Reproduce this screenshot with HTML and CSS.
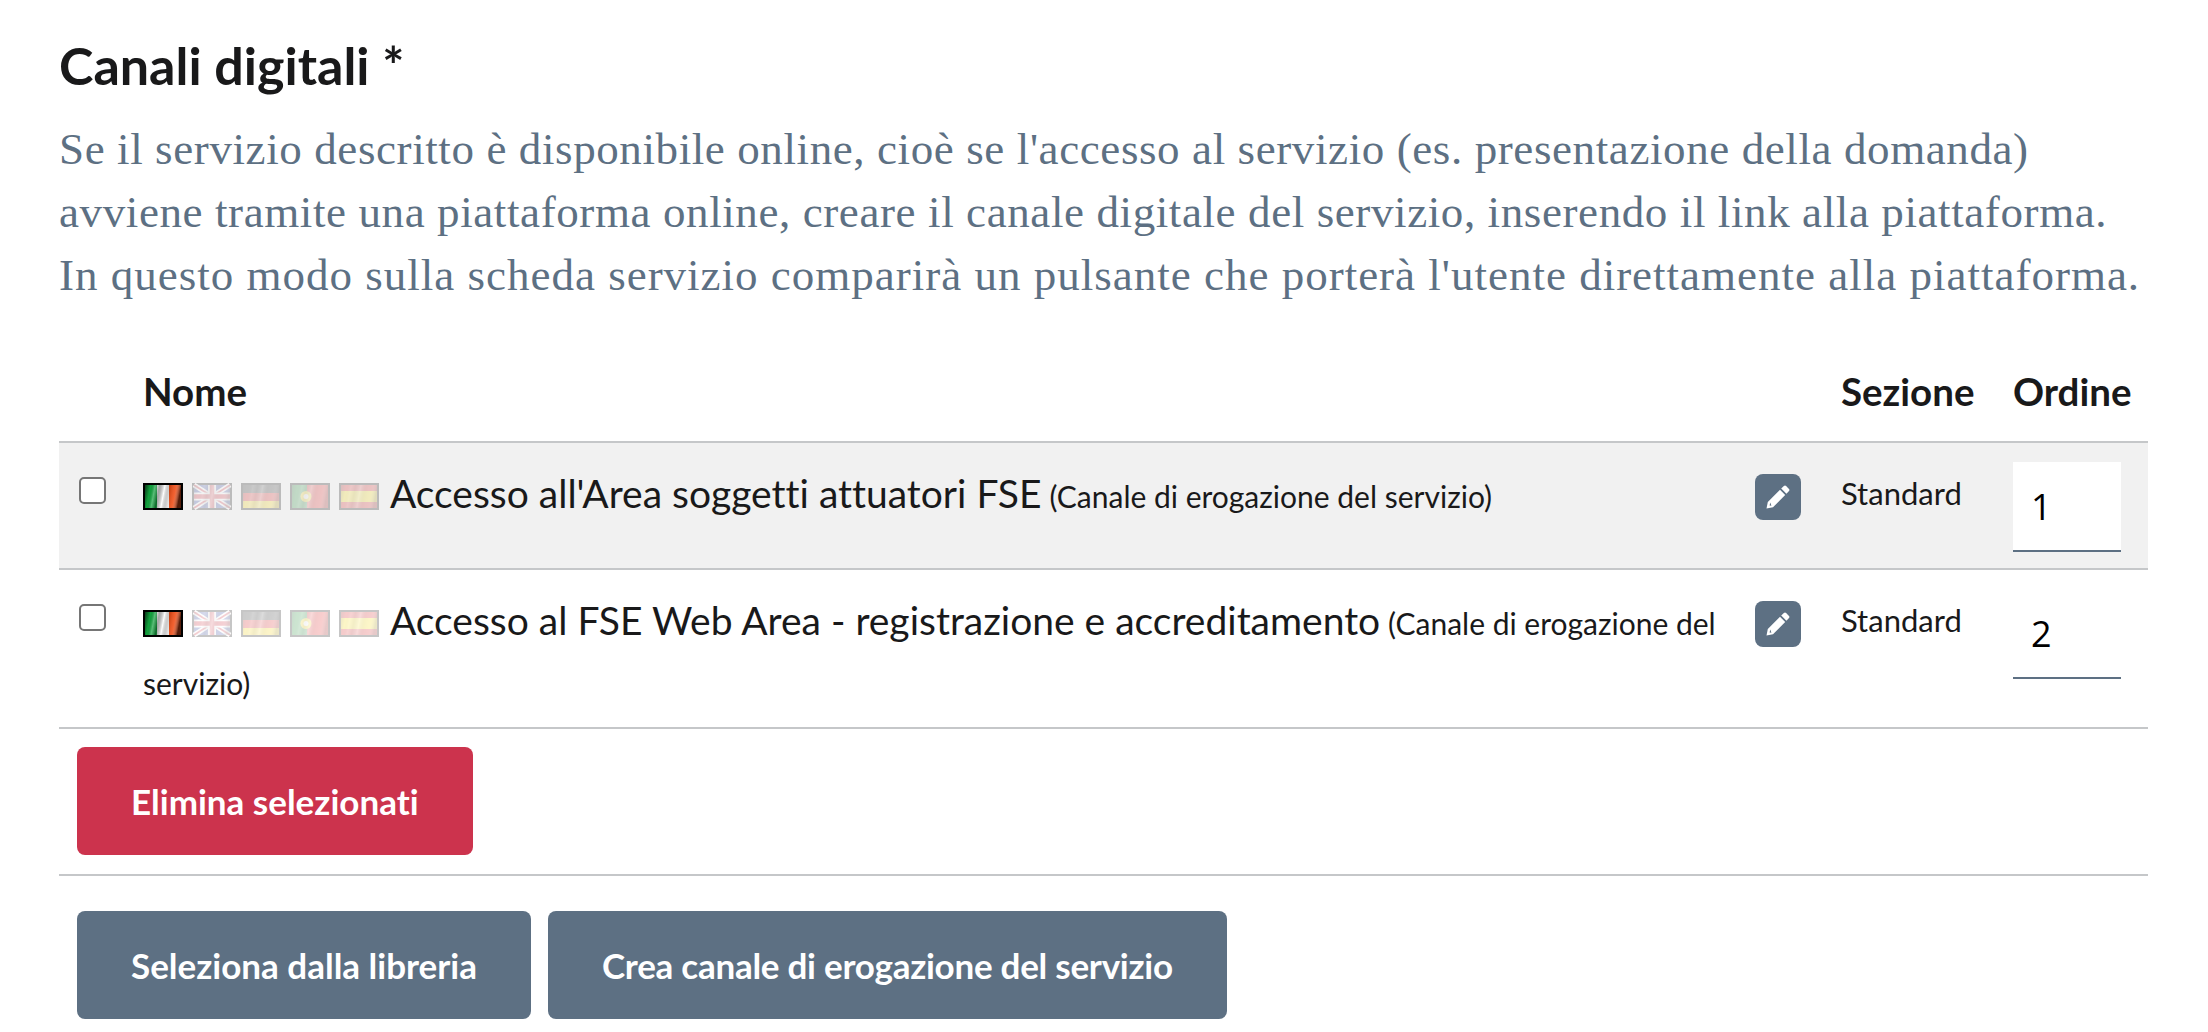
FILE: index.html
```html
<!DOCTYPE html>
<html lang="it">
<head>
    <meta charset="UTF-8">
    <title>Canali digitali</title>
    <link rel="stylesheet" href="styles.css">
</head>
<body>
    <svg class="flag-defs" width="0" height="0">
        <defs>
            <linearGradient id="shine" x1="0" y1="0" x2="1" y2="0.12">
                <stop offset="0" stop-color="#000" stop-opacity="0.65"/>
                <stop offset="0.16" stop-color="#000" stop-opacity="0"/>
                <stop offset="0.28" stop-color="#fff" stop-opacity="0.3"/>
                <stop offset="0.4" stop-color="#000" stop-opacity="0.35"/>
                <stop offset="0.55" stop-color="#fff" stop-opacity="0.6"/>
                <stop offset="0.7" stop-color="#000" stop-opacity="0.15"/>
                <stop offset="0.85" stop-color="#fff" stop-opacity="0.1"/>
                <stop offset="1" stop-color="#000" stop-opacity="0.65"/>
            </linearGradient>
            <symbol id="flag-it" viewBox="0 0 40 27">
                <rect width="40" height="27" fill="#000"/>
                <rect x="2" y="2" width="12" height="23" fill="#12a33e"/>
                <rect x="14" y="2" width="12" height="23" fill="#fff"/>
                <rect x="26" y="2" width="12" height="23" fill="#f0501a"/>
                <rect x="2" y="2" width="36" height="23" fill="url(#shine)"/>
            </symbol>
            <symbol id="flag-uk" viewBox="0 0 40 27">
                <rect width="40" height="27" fill="#000"/>
                <rect x="2" y="2" width="36" height="23" fill="#2b3fa0"/>
                <path d="M2 2 38 25M38 2 2 25" stroke="#fff" stroke-width="5"/>
                <path d="M2 2 38 25M38 2 2 25" stroke="#d02030" stroke-width="1.5"/>
                <path d="M20 2V25M2 13.500H38" stroke="#fff" stroke-width="8"/>
                <path d="M20 2V25M2 13.500H38" stroke="#d02030" stroke-width="4.500"/>
                <rect x="2" y="2" width="36" height="23" fill="url(#shine)" opacity="0.5"/>
            </symbol>
            <symbol id="flag-de" viewBox="0 0 40 27">
                <rect width="40" height="27" fill="#000"/>
                <rect x="2" y="2" width="36" height="8" fill="#222"/>
                <rect x="2" y="10" width="36" height="8" fill="#d81818"/>
                <rect x="2" y="18" width="36" height="7" fill="#f5d000"/>
                <rect x="2" y="2" width="36" height="23" fill="url(#shine)" opacity="0.5"/>
            </symbol>
            <symbol id="flag-pt" viewBox="0 0 40 27">
                <rect width="40" height="27" fill="#000"/>
                <rect x="2" y="2" width="15" height="23" fill="#1a8a30"/>
                <rect x="17" y="2" width="21" height="23" fill="#e01818"/>
                <circle cx="16" cy="13.500" r="5.500" fill="#f0d000"/>
                <circle cx="16" cy="13.500" r="2.500" fill="#fff"/>
                <rect x="2" y="2" width="36" height="23" fill="url(#shine)" opacity="0.5"/>
            </symbol>
            <symbol id="flag-es" viewBox="0 0 40 27">
                <rect width="40" height="27" fill="#000"/>
                <rect x="2" y="2" width="36" height="23" fill="#d81818"/>
                <rect x="2" y="8" width="36" height="11" fill="#f5d800"/>
                <rect x="2" y="2" width="36" height="23" fill="url(#shine)" opacity="0.5"/>
            </symbol>
            <symbol id="icon-pencil" viewBox="0 0 24 24">
                <path d="M15.200 3.600 17.900 1Q19 0 20.100 1L23 3.900Q24 5 23 6.100L20.400 8.800Z"/>
                <path fill-rule="evenodd" d="M14 4.800 19.200 10 7 22.200 0.500 23.500 1.800 17ZM4.300 17.600 3.600 20.400 5.400 20.800Z"/>
            </symbol>
        </defs>
    </svg>

    <main class="channels">
        <h2 class="channels-title">Canali digitali *</h2>
        <p class="channels-help">
            <span class="help-line">Se il servizio descritto è disponibile online, cioè se l'accesso al servizio (es. presentazione della domanda)</span>
            <span class="help-line">avviene tramite una piattaforma online, creare il canale digitale del servizio, inserendo il link alla piattaforma.</span>
            <span class="help-line help-line-wide">In questo modo sulla scheda servizio comparirà un pulsante che porterà l'utente direttamente alla piattaforma.</span>
        </p>

        <table class="channels-table">
            <colgroup>
                <col class="col-check">
                <col class="col-name">
                <col class="col-edit">
                <col class="col-section">
                <col class="col-order">
            </colgroup>
            <thead>
                <tr>
                    <th></th>
                    <th class="cell-name">Nome</th>
                    <th></th>
                    <th>Sezione</th>
                    <th>Ordine</th>
                </tr>
            </thead>
            <tbody>
                <tr class="row-hover">
                    <td class="cell-check"><input type="checkbox"></td>
                    <td class="cell-name">
                        <svg class="flag"><use href="#flag-it"/></svg><svg class="flag off"><use href="#flag-uk"/></svg><svg class="flag off"><use href="#flag-de"/></svg><svg class="flag off"><use href="#flag-pt"/></svg><svg class="flag off"><use href="#flag-es"/></svg>
                        <span class="channel-name">Accesso all'Area soggetti attuatori FSE</span>
                        <small class="channel-type">(Canale di erogazione del servizio)</small>
                    </td>
                    <td><a class="btn-edit" href="#"><svg class="icon"><use href="#icon-pencil"/></svg></a></td>
                    <td class="cell-section">Standard</td>
                    <td><input class="order-input" type="text" value="1"></td>
                </tr>
                <tr>
                    <td class="cell-check"><input type="checkbox"></td>
                    <td class="cell-name">
                        <svg class="flag"><use href="#flag-it"/></svg><svg class="flag off"><use href="#flag-uk"/></svg><svg class="flag off"><use href="#flag-de"/></svg><svg class="flag off"><use href="#flag-pt"/></svg><svg class="flag off"><use href="#flag-es"/></svg>
                        <span class="channel-name">Accesso al FSE Web Area - registrazione e accreditamento</span>
                        <small class="channel-type">(Canale di erogazione del servizio)</small>
                    </td>
                    <td><a class="btn-edit" href="#"><svg class="icon"><use href="#icon-pencil"/></svg></a></td>
                    <td class="cell-section">Standard</td>
                    <td><input class="order-input" type="text" value="2"></td>
                </tr>
            </tbody>
        </table>

        <div class="actions actions-delete">
            <button class="btn btn-danger" type="button">Elimina selezionati</button>
        </div>
        <div class="actions">
            <button class="btn" type="button">Seleziona dalla libreria</button>
            <button class="btn btn-long" type="button">Crea canale di erogazione del servizio</button>
        </div>
    </main>
</body>
</html>
```

FILE: styles.css
```css
html, body {
    margin: 0;
    padding: 0;
    background: #fff;
}
body {
    font-family: Lato, "Noto Sans", sans-serif;
    font-variant-ligatures: none;
    color: #19191a;
}
.flag-defs {
    position: absolute;
}
.channels {
    width: 2089px;
    margin-left: 59px;
    padding-top: 33px;
}
.channels-title {
    margin: 0;
    font-size: 52px;
    line-height: 64px;
    font-weight: 700;
}
.channels-help {
    margin: 21px 0 0;
    font-family: "Liberation Serif", serif;
    font-size: 45px;
    line-height: 63px;
    letter-spacing: 0.6px;
    color: #5d7083;
}
.help-line {
    display: block;
    white-space: nowrap;
}
.help-line-wide {
    letter-spacing: 1px;
}
.channels-table {
    width: 100%;
    margin-top: 38px;
    border-collapse: collapse;
    table-layout: fixed;
}
.col-check { width: 84px; }
.col-edit { width: 86px; }
.col-section { width: 172px; }
.col-order { width: 155px; }
th {
    height: 97px;
    padding: 0 0 5px 20px;
    box-sizing: border-box;
    font-size: 38.5px;
    font-weight: 700;
    text-align: left;
    border-bottom: 2px solid #c5c7c9;
}
th.cell-name {
    padding-left: 0;
}
td {
    padding: 19px 0 13px 20px;
    font-size: 31px;
    line-height: 60px;
    vertical-align: top;
    border-bottom: 2px solid #c5c7c9;
}
td.cell-name {
    padding: 20px 0 14px;
}
td.cell-section {
    padding-top: 20px;
}
.row-hover td {
    background: #f1f1f1;
}
.cell-check input {
    display: block;
    box-sizing: border-box;
    appearance: none;
    width: 27px;
    height: 27px;
    margin: 15px 0 0;
    border: 2.500px solid #767676;
    border-radius: 5px;
    background: #fff;
}
.flag {
    width: 40px;
    height: 27px;
    margin-right: 9px;
    vertical-align: -2px;
    filter: blur(0.6px);
}
.flag.off {
    opacity: 0.22;
    filter: blur(0.7px);
}
.channel-name {
    margin-left: -6px;
    font-size: 39px;
}
.channel-type {
    font-size: 30px;
}
.btn-edit {
    width: 46px;
    height: 46px;
    margin-top: 12px;
    border-radius: 8px;
    background: #5d7083;
    display: flex;
    align-items: center;
    justify-content: center;
}
.icon {
    width: 24px;
    height: 24px;
    fill: #fff;
}
.order-input {
    display: block;
    box-sizing: border-box;
    width: 108px;
    height: 90px;
    margin-bottom: 3px;
    padding: 0 0 0 18px;
    border: 0;
    border-bottom: 2px solid #5d7083;
    background: transparent;
    font-family: "Open Sans", sans-serif;
    font-size: 36px;
    color: #000;
}
.row-hover .order-input {
    background: #fff;
}
.actions {
    display: flex;
    gap: 17px;
    padding: 35px 0 13px 18px;
}
.actions-delete {
    padding: 18px 0 19px 18px;
    border-bottom: 2px solid #c5c7c9;
}
.btn {
    height: 108px;
    padding: 0 54px;
    border: 0;
    border-radius: 8px;
    background: #5d7083;
    color: #fff;
    font-family: Lato, "Noto Sans", sans-serif;
    font-variant-ligatures: none;
    font-size: 35px;
    font-weight: 700;
}
.btn-long {
    letter-spacing: -0.26px;
}
.btn-danger {
    background: #cc334d;
}
```
